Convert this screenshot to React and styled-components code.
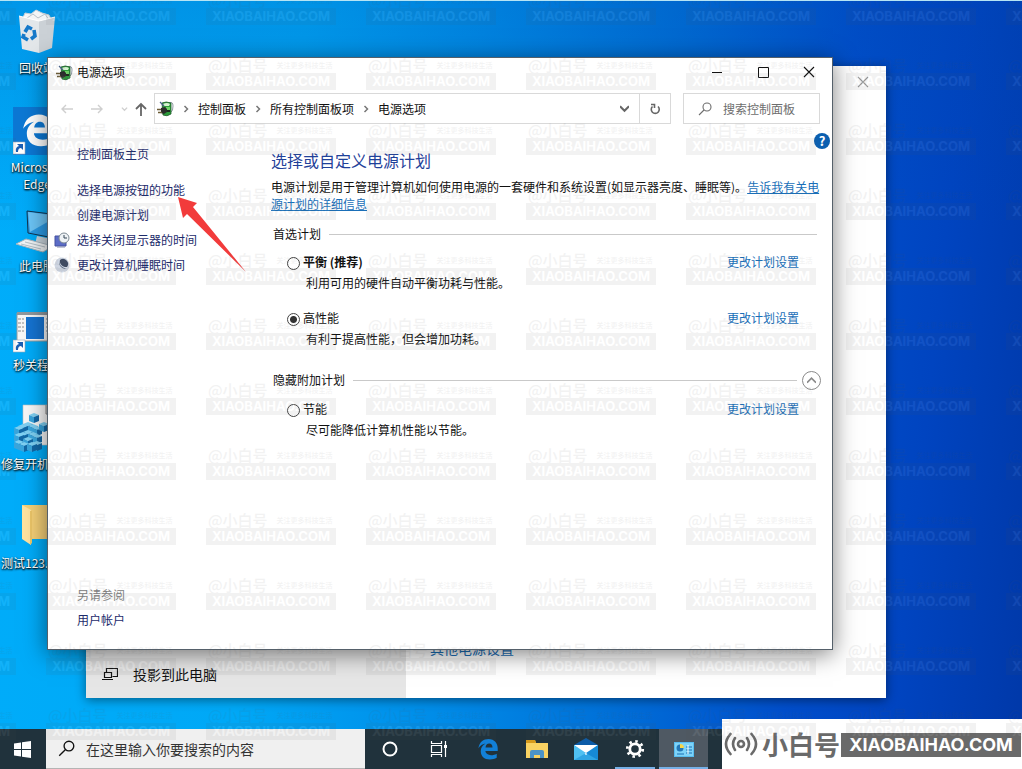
import React, { useState } from 'react';
import styled, { createGlobalStyle, css } from 'styled-components';

const colors = {
  ink: '#111',
  nav: '#1d2b6b',
  heading: '#1f4199',
  link: '#1a6fb8',
  muted: '#6d6d6d',
  line: '#c9c9c9',
  box: '#d9d9d9',
  taskbar: '#20323c',
  brand: '#6a6a6a',
  accent: '#76b0e6',
};

const GlobalStyle = createGlobalStyle`
  * {
    box-sizing: border-box;
  }

  body {
    margin: 0;
    font-family: 'Noto Sans CJK SC', 'Open Sans', sans-serif;
    font-size: 12px;
    line-height: 16px;
    color: ${colors.ink};
  }

  button, input {
    font: inherit;
    color: inherit;
  }

  button {
    padding: 0;
    border: 0;
    background: none;
  }

  svg {
    display: block;
    flex: none;
  }
`;

/* Desktop */

const Screen = styled.div`
  position: relative;
  display: flex;
  flex-direction: column;
  min-height: 100vh;
  overflow: hidden;
  border-top: 1px solid #b5e4f5;
  background:
    linear-gradient(180deg, rgba(0, 70, 170, 0.22), rgba(0, 70, 170, 0) 30%),
    linear-gradient(
      96deg,
      #00adfa 0%,
      #00a8f6 28%,
      #0090ea 44%,
      #0070d8 62%,
      #004ecb 78%,
      #0044c0 88%,
      #0038a8 100%
    );
`;

const Workspace = styled.main`
  position: relative;
  flex: 1;
`;

const Shortcuts = styled.ul`
  display: grid;
  grid-auto-rows: 99px;
  width: 74px;
  margin: 0;
  padding: 0;
  list-style: none;
`;

const Shortcut = styled.li`
  display: flex;
  flex-direction: column;
  align-items: ${p => (p.$long ? 'flex-start' : 'center')};
  gap: 3px;
  padding: 7px 0 0 ${p => (p.$long ? 1 : 0)}px;
  line-height: 17px;
  color: #fff;
  text-align: center;
  white-space: nowrap;
  text-shadow: 0 1px 2px #000, 1px 1px 2px rgba(0, 0, 0, 0.8);

  svg {
    align-self: center;
  }
`;

/* Windows */

const SettingsWindow = styled.section`
  position: absolute;
  top: 65px;
  left: 86px;
  right: 136px;
  bottom: 31px;
  display: flex;
  background: #fff;
  box-shadow: 0 2px 10px rgba(0, 0, 0, 0.45);
`;

const SettingsMenu = styled.div`
  display: flex;
  flex-direction: column;
  justify-content: flex-end;
  width: 320px;
  background: #e6e6e6;
`;

const SettingsItem = styled.button`
  display: flex;
  align-items: center;
  gap: 15px;
  height: 48px;
  padding-left: 16px;
  font-size: 14px;
`;

const SettingsBody = styled.div`
  display: flex;
  flex: 1;
  flex-direction: column;
  justify-content: space-between;
  align-items: flex-start;
  padding: 0 0 40px 24px;
  font-size: 14px;
  line-height: 20px;
`;

const SettingsClose = styled.button`
  display: grid;
  place-items: center;
  align-self: flex-end;
  width: 46px;
  height: 32px;
  color: #999;
`;

const PowerWindow = styled.section`
  position: absolute;
  top: 56px;
  left: 47px;
  right: 189px;
  bottom: 79px;
  display: flex;
  flex-direction: column;
  border: 1px solid #55606a;
  background: #fff;
  box-shadow: 0 4px 22px rgba(0, 0, 0, 0.5);
`;

const TitleBar = styled.header`
  display: flex;
  align-items: center;
  height: 28px;
  padding-left: 8px;
`;

const Title = styled.h1`
  flex: 1;
  margin: 0 0 0 4px;
  font-size: 12px;
  font-weight: 400;
`;

const WindowButton = styled.button`
  display: grid;
  place-items: center;
  width: 46px;
  height: 28px;
`;

const Toolbar = styled.div`
  display: flex;
  gap: 12px;
  height: 47px;
  padding: 7px 12px 9px 11px;
`;

const AddressGroup = styled.div`
  display: flex;
  flex: 1;
  align-items: center;
  height: 31px;
`;

const History = styled.div`
  display: flex;
  align-items: center;
  width: 95px;
`;

const HistoryButton = styled.button`
  display: grid;
  place-items: center;
  width: ${p => p.$width}px;
  height: 30px;
  color: ${p => (p.$active ? '#666' : '#cfcfcf')};
`;

const AddressBar = styled.nav`
  display: flex;
  flex: 1;
  align-items: center;
  height: 31px;
  padding-left: 2px;
  border: 1px solid ${colors.box};
`;

const Crumbs = styled.ol`
  display: flex;
  flex: 1;
  align-items: center;
  margin: 0;
  padding: 0;
  list-style: none;
`;

const Crumb = styled.li`
  display: flex;
  align-items: center;

  a {
    color: inherit;
    text-decoration: none;
  }

  svg {
    width: 24px;
    color: #777;
  }
`;

const AddressButton = styled.button`
  display: grid;
  place-items: center;
  width: ${p => (p.$divided ? 31 : 30)}px;
  height: 29px;
  color: #666;
  ${p =>
    p.$divided &&
    css`
      border-left: 1px solid ${colors.box};
    `}
`;

const SearchBox = styled.label`
  display: flex;
  align-items: center;
  gap: 11px;
  width: 137px;
  height: 31px;
  padding-left: 14px;
  border: 1px solid ${colors.box};
  color: ${colors.muted};
`;

const SearchInput = styled.input`
  flex: 1;
  min-width: 0;
  padding: 0;
  border: 0;
  outline: 0;
  background: none;

  &::placeholder {
    color: ${p => p.$tone || colors.muted};
    opacity: 1;
  }
`;

const WindowBody = styled.div`
  display: flex;
  flex: 1;
`;

const Sidebar = styled.aside`
  display: flex;
  flex-direction: column;
  width: 211px;
  padding: 8px 6px 17px;
`;

const TaskLink = styled.a`
  display: grid;
  grid-template-columns: 16px 1fr;
  column-gap: 7px;
  align-items: center;
  height: 25px;
  margin-bottom: ${p => (p.$home ? 11 : 0)}px;
  color: ${colors.nav};
  text-decoration: none;

  span {
    grid-column: 2;
  }
`;

const SeeAlso = styled.p`
  margin: auto 0 0;
  padding-left: 23px;
  line-height: 24px;
  color: #808080;
`;

const Content = styled.div`
  flex: 1;
  padding: 0 11px 0 12px;
`;

const HelpButton = styled.button`
  display: block;
  width: 16px;
  height: 16px;
  margin: 0 -9px 0 auto;
  border-radius: 50%;
  background: #0b5fb0;
  color: #fff;
  font-size: 13px;
  font-weight: 700;
`;

const Heading = styled.h2`
  margin: 0;
  font-size: 16px;
  font-weight: 400;
  line-height: 22px;
  color: ${colors.heading};
`;

const Intro = styled.p`
  margin: 7px 0 14px;
  line-height: 17px;
`;

const TextLink = styled.a`
  color: ${colors.link};
  text-decoration: ${p => (p.$underlined ? 'underline' : 'none')};
`;

const GroupHeader = styled.div`
  display: flex;
  align-items: center;
  gap: 8px;
  height: ${p => p.$height}px;
  margin-bottom: ${p => p.$space}px;
  padding: 0 ${p => p.$inset}px 0 2px;

  &::after {
    content: '';
    order: 1;
    flex: 1;
    border-top: 1px solid ${colors.line};
  }
`;

const CollapseButton = styled.button`
  order: 2;
  display: grid;
  place-items: center;
  width: 19px;
  height: 19px;
  margin-left: -3px;
  border: 1px solid #8a8a8a;
  border-radius: 50%;
  color: #8a8a8a;
`;

const Plan = styled.div`
  display: grid;
  grid-template-columns: 13px 1fr auto;
  column-gap: 3px;
  align-items: center;
  margin-bottom: 14px;
  padding: 0 22px 0 16px;
  line-height: 21px;
`;

const Radio = styled.input`
  appearance: none;
  width: 13px;
  height: 13px;
  margin: 3px 0 0;
  border: 1px solid #444;
  border-radius: 50%;
  background: #fff;

  &:checked {
    background: radial-gradient(circle, #333 0 3px, #fff 4px);
  }
`;

const PlanName = styled.label`
  font-weight: ${p => (p.$strong ? 700 : 400)};
`;

const PlanNote = styled.p`
  grid-column: 2 / -1;
  margin: 0 0 0 3px;
`;

const Pointer = styled.svg`
  position: absolute;
  left: 178px;
  top: 196px;
`;

/* Taskbar */

const Taskbar = styled.footer`
  display: flex;
  height: 40px;
  background: ${colors.taskbar};
`;

const StartButton = styled.button`
  display: grid;
  place-items: center;
  width: 46px;
  padding-right: 2px;
`;

const TaskSearch = styled.label`
  display: flex;
  align-items: center;
  gap: 11px;
  width: 319px;
  padding-left: 12px;
  border-bottom: 1px solid #b4b4b4;
  background: #f0f0f0;
  font-size: 14px;
`;

const TaskButton = styled.button`
  display: grid;
  place-items: center;
  width: 49px;
  color: #fff;
  ${p =>
    p.$running &&
    css`
      background: linear-gradient(${colors.accent}, ${colors.accent}) bottom / 40px 2px no-repeat;
    `}
  ${p =>
    p.$current &&
    css`
      background-color: #4f5963;
      background-size: 100% 2px;
    `}
`;

/* Marks laid over everything */

const Brand = styled.div`
  position: absolute;
  right: 0;
  bottom: 0;
  display: flex;
  align-items: center;
  width: 300px;
  height: 50px;
  padding-left: 2px;
  background: #fff;
  color: ${colors.brand};
`;

const BrandName = styled.span`
  margin-left: 4px;
  font-size: 26px;
  font-weight: 700;
  line-height: 32px;
`;

const BrandSite = styled.strong`
  flex: 1;
  margin: 2px 1px 0 1px;
  background: ${colors.brand};
  color: #fff;
  font: 700 18px/24px Inter, 'Liberation Sans', sans-serif;
  text-align: center;
`;

const Watermark = styled.div`
  position: absolute;
  inset: 0;
  overflow: hidden;
  opacity: 0.07;
  pointer-events: none;
`;

const WatermarkGrid = styled.div`
  display: grid;
  grid-template-columns: repeat(auto-fill, 160px);
  grid-auto-rows: 65px;
  margin: -10px -160px 0 -114px;
`;

const Mark = styled.div`
  width: 130px;
  color: #555;

  p {
    display: flex;
    align-items: center;
    gap: 9px;
    height: 17px;
    margin: 0;
    padding-left: 2px;
    font-size: 15px;
    font-weight: 500;
    white-space: nowrap;
  }

  small {
    font-size: 7px;
  }

  strong {
    display: block;
    background: #555;
    color: #fff;
    font: 700 13px/17px Inter, 'Liberation Sans', sans-serif;
    text-align: center;
  }
`;

/* Icons */

const Cross = () => (
  <svg width="12" height="12" viewBox="0 0 12 12" stroke="currentColor" strokeWidth="1.1">
    <path d="M1 1l10 10M11 1L1 11" />
  </svg>
);

const Magnifier = ({ size }) => (
  <svg width={size} height={size} viewBox="0 0 14 14" fill="none" stroke="currentColor" strokeWidth="1.1">
    <circle cx="9" cy="5" r="4" />
    <path d="M6 8l-5 5" />
  </svg>
);

const Chevron = ({ d, size = 8, weight = 1.5 }) => (
  <svg height={size} width={size} viewBox="0 0 8 8" fill="none" stroke="currentColor" strokeWidth={weight}>
    <path d={d} />
  </svg>
);

const PowerIcon = () => (
  <svg width="17" height="17" viewBox="0 0 17 17">
    <path d="M12 3q4-2 4 3t-2 6" fill="none" stroke="#8f99a3" />
    <path d="M5 3q4-2 9 0v11q-4 3-8 1z" fill="#2c9a3a" stroke="#1e5a2a" strokeWidth=".8" />
    <path d="M6 4q4-2 7 0l-1 2H7z" fill="#d6f2cf" />
    <path d="M9 7h4v3q-2 1-4 0z" fill="#6fd567" />
    <path d="M3 2l4 4" stroke="#4c6288" strokeWidth="1.2" />
    <path d="M4 8l4-1 2 2v3l-3 2-3-1z" fill="#2a2d2b" />
    <path d="M10 11h3" stroke="#1b2a1d" strokeWidth="2" />
    <path d="M0 9.500h4M1 12.500h4" stroke="#6b5b36" strokeWidth="1.500" />
  </svg>
);

const ShortcutArrow = () => (
  <g>
    <path d="M0 35h12v12H0z" fill="#fff" stroke="#9ab" strokeWidth=".6" />
    <path d="M3 45q-1-5 3-6l-2-2h6v6l-2-2q-3 0-3 4z" fill="#1b5fb4" />
  </g>
);

const RecycleBin = () => (
  <svg width="38" height="48" viewBox="0 0 38 48">
    <path d="M4 12l3-7 6 1 5-4 6 3 7 2 3 6-14 5z" fill="#f4f5f6" stroke="#c9d1d8" />
    <path d="M9 10l6-4 5 4 7-4 4 6" fill="none" stroke="#b8c2ca" />
    <path d="M1 8l20 5v32L4 41z" fill="#e3e7ea" />
    <path d="M37 9l-16 4v32l13-5z" fill="#cbd1d6" />
    <path d="M1 8l20 5 16-4" fill="none" stroke="#fff" />
    <g fill="none" stroke="#1679c9" strokeWidth="3.6">
      <path d="M7 24l3-5 4 2M16 22l1 6-4 3M10 32l-5-3 1-3" />
    </g>
  </svg>
);

const EdgeShape = ({ size, color }) => (
  <svg width={size} height={size} viewBox="0 0 24 24" fill={color}>
    <path d="M1.5 11.2C2.6 4.300 7 1 12.600 1c6.500 0 10 4.700 10 10.300v3H9.100c.3 3 3 4.500 6.200 4.500 2.400 0 4.500-.7 6.200-1.700v4.500c-2 1.200-4.500 1.800-7.400 1.800-6.300 0-10-3.700-10-9 0-3.600 1.900-6.500 5.200-8.300C7 6.600 3.500 7.900 1.500 11.200zM9.300 10.300h7.600c0-2.700-1.400-4.200-3.600-4.200-2.300 0-3.700 1.700-4 4.200z" />
  </svg>
);

const EdgeTile = () => (
  <svg width="48" height="48" viewBox="0 0 48 48">
    <path d="M0 0h48v48H0z" fill="#0c78d4" />
    <svg x="8" y="6" width="34" height="34">
      <EdgeShape size="34" color="#fff" />
    </svg>
    <ShortcutArrow />
  </svg>
);

const ComputerIcon = () => (
  <svg width="48" height="48" viewBox="0 0 48 48">
    <path d="M14 5l32 4v24l-31-6z" fill="#2b9be6" stroke="#13344f" />
    <path d="M15 6l30 4-28 16z" fill="#6cc5f7" />
    <path d="M24 30l10 2 2 6H22z" fill="#c9d4dc" />
    <path d="M3 38l10-5 27 7-10 6z" fill="#f1f4f6" stroke="#a9b6bf" />
    <path d="M8 38l20 5M12 36l20 5" stroke="#b4c0c8" />
  </svg>
);

const ProgramIcon = () => (
  <svg width="48" height="48" viewBox="0 0 48 48">
    <path d="M4 8h44v28H4z" fill="#f7f7f7" stroke="#9b9b9b" />
    <path d="M4 7h44v3H4z" fill="#8f979d" />
    <path d="M13 12h18v22H13z" fill="#1573d1" />
    <path d="M5 14h6M5 18h6M5 22h6M5 26h6M33 14h6M33 18h6M33 22h6M33 26h6" stroke="#8d8d8d" strokeDasharray="3 1" />
    <ShortcutArrow />
  </svg>
);

const Cube = ({ x, y }) => (
  <g transform={`translate(${x} ${y})`}>
    <path d="M0 2l5-2 5 2-5 2z" fill="#7fd0f2" />
    <path d="M0 2l5 2v6L0 8z" fill="#3aa5dc" />
    <path d="M10 2L5 4v6l5-2z" fill="#1268a6" />
  </g>
);

const cubes = [
  [9, 18], [4, 20], [14, 20], [0, 22], [18, 22],
  [9, 26], [4, 28], [14, 28], [0, 29], [18, 30],
  [9, 33], [0, 36], [18, 37], [5, 38], [13, 38],
];

const RegistryIcon = () => (
  <svg width="48" height="48" viewBox="0 0 48 48">
    <path d="M9 1h25l9 9v31H9z" fill="#f7f7f7" stroke="#c0c0c0" strokeWidth=".6" />
    <path d="M32 1v9h9" fill="#ddd" stroke="#888" />
    {cubes.map(([x, y]) => (
      <Cube key={`${x}-${y}`} x={x} y={y} />
    ))}
    <Cube x={15} y={9} />
    <Cube x={25} y={18} />
  </svg>
);

const FolderIcon = () => (
  <svg width="48" height="48" viewBox="0 0 48 48">
    <path d="M8 2h34v34H17z" fill="#f5d077" />
    <path d="M8 2l9 5v35l-9-6z" fill="#ffe3a0" />
    <path d="M16 8h2v32l-2 2z" fill="#ecc568" />
  </svg>
);

const DisplayClockIcon = () => (
  <svg width="16" height="16" viewBox="0 0 16 16">
    <path d="M1 4h11v10H1z" fill="#5b6cc6" stroke="#4450a0" />
    <path d="M3 15h8" stroke="#8890b0" />
    <circle cx="10" cy="6" r="5" fill="#eef2f5" stroke="#7d8a94" />
    <path d="M10 3v3h3" fill="none" stroke="#345" />
  </svg>
);

const MoonIcon = () => (
  <svg width="16" height="16" viewBox="0 0 16 16">
    <circle cx="8" cy="8" r="7.500" fill="#cfd6e2" />
    <path d="M5 3a6 6 0 0 0 8 9A6 6 0 0 1 5 3z" fill="#8d9bb8" />
    <path d="M6 3a5 5 0 0 1 7 7A6 6 0 0 1 6 3z" fill="#3f4b62" />
    <path d="M6 3a6 6 0 0 0 7 8q-3 2-6-1T6 3z" fill="#56657f" />
  </svg>
);

const ProjectIcon = () => (
  <svg width="16" height="14" viewBox="0 0 16 14" fill="none" stroke="#111" strokeWidth="1.200">
    <path d="M4.500 5.500v-4h11v8h-5M2.500 5.500h7v5h-7zM0 12.500h11" />
  </svg>
);

const ExplorerIcon = () => (
  <svg width="22" height="18" viewBox="0 0 22 18">
    <path d="M0 0h9l1 3h12v15H0z" fill="#f9d262" />
    <path d="M0 0h9l1 3H0z" fill="#d69a1c" />
    <path d="M4 18v-6q0-2 2-2h10q2 0 2 2v6h-4v-3H8v3z" fill="#4b93c7" />
  </svg>
);

const MailIcon = () => (
  <svg width="24" height="22" viewBox="0 0 24 22">
    <path d="M0 7l12-7 12 7v3H0z" fill="#0c5ca8" />
    <path d="M0 7h24v15H0z" fill="#2fa5e4" />
    <path d="M0 7h24L12 17z" fill="#fff" />
    <path d="M0 7l12 8L0 22z" fill="#4fc0f2" />
    <path d="M24 7v15L10 14l2 1z" fill="#168ad6" />
  </svg>
);

const GearIcon = () => (
  <svg width="20" height="20" viewBox="0 0 20 20" fill="none" stroke="#fff">
    <circle cx="10" cy="10" r="5.200" strokeWidth="2.800" />
    <circle cx="10" cy="10" r="7.700" strokeWidth="2.800" strokeDasharray="2.500 3.550" />
  </svg>
);

const ControlPanelIcon = () => (
  <svg width="20" height="15" viewBox="0 0 20 15">
    <path d="M0 0h20v15H0z" fill="#58bdf0" />
    <path d="M1 1h18v13H1z" fill="#7ed3f8" />
    <circle cx="6" cy="6" r="3.500" fill="#2277b8" />
    <path d="M6 6V2a4 4 0 0 1 4 4z" fill="#f7d64a" />
    <path d="M3 12h7M12 5h6M12 8h6M12 11h6" stroke="#1a70b5" />
    <path d="M14 3v9" stroke="#fff" />
  </svg>
);

const TaskViewIcon = () => (
  <svg width="18" height="16" viewBox="0 0 18 16" fill="none" stroke="#fff" strokeWidth="1.200">
    <path d="M1.500 4.500h10v7h-10zM1.500 0v2.500h10V0M1.500 16v-2.500h10V16M15.500 0v16" />
    <path d="M14 5.500h3" strokeWidth="3" />
  </svg>
);

const SignalIcon = () => (
  <svg width="34" height="26" viewBox="0 0 34 26" fill="none" stroke="currentColor" strokeWidth="2.600" strokeLinecap="round">
    <circle cx="17" cy="13" r="3" />
    <path d="M11 7q-4 6 0 12M23 7q4 6 0 12M6.500 3q-9 10 0 20M27.500 3q9 10 0 20" />
  </svg>
);

/* Data */

const shortcuts = [
  { name: '回收站', icon: <RecycleBin /> },
  { name: ['Microsoft', 'Edge'], icon: <EdgeTile /> },
  { name: '此电脑', icon: <ComputerIcon /> },
  { name: '秒关程序', icon: <ProgramIcon /> },
  { name: '修复开机', icon: <RegistryIcon />, long: true },
  { name: '测试123.', icon: <FolderIcon />, long: true },
];

const tasks = [
  { name: '选择电源按钮的功能' },
  { name: '创建电源计划' },
  { name: '选择关闭显示器的时间', icon: <DisplayClockIcon /> },
  { name: '更改计算机睡眠时间', icon: <MoonIcon /> },
];

const preferred = [
  { id: 'balanced', name: '平衡 (推荐)', note: '利用可用的硬件自动平衡功耗与性能。', strong: true },
  { id: 'high', name: '高性能', note: '有利于提高性能，但会增加功耗。' },
];

const additional = [{ id: 'saver', name: '节能', note: '尽可能降低计算机性能以节能。' }];

const crumbs = ['控制面板', '所有控制面板项', '电源选项'];

function PlanRow({ plan, checked, onSelect }) {
  return (
    <Plan>
      <Radio
        type="radio"
        name="plan"
        id={plan.id}
        checked={checked}
        onChange={() => onSelect(plan.id)}
      />
      <PlanName htmlFor={plan.id} $strong={plan.strong}>
        {plan.name}
      </PlanName>
      <TextLink href="#plan">更改计划设置</TextLink>
      <PlanNote>{plan.note}</PlanNote>
    </Plan>
  );
}

function Settings() {
  return (
    <SettingsWindow>
      <SettingsMenu>
        <SettingsItem>
          <ProjectIcon />
          投影到此电脑
        </SettingsItem>
      </SettingsMenu>
      <SettingsBody>
        <SettingsClose aria-label="关闭">
          <Cross />
        </SettingsClose>
        <TextLink href="#other">其他电源设置</TextLink>
      </SettingsBody>
    </SettingsWindow>
  );
}

function Address() {
  return (
    <AddressGroup>
      <History>
        <HistoryButton aria-label="后退" $width={16}>
          <svg width="12" height="10" fill="none" stroke="currentColor" strokeWidth="1.400">
            <path d="M12 5H1M5 1L1 5l4 4" />
          </svg>
        </HistoryButton>
        <HistoryButton aria-label="前进" $width={44}>
          <svg width="12" height="10" fill="none" stroke="currentColor" strokeWidth="1.400">
            <path d="M0 5h11M7 1l4 4-4 4" />
          </svg>
        </HistoryButton>
        <HistoryButton aria-label="最近" $width={10}>
          <Chevron d="M1 3l3 3 3-3" size={7} />
        </HistoryButton>
        <HistoryButton aria-label="上移" $active $width={24}>
          <svg width="12" height="14" fill="none" stroke="currentColor" strokeWidth="1.800">
            <path d="M6 14V2M1 7l5-5 5 5" />
          </svg>
        </HistoryButton>
      </History>
      <AddressBar aria-label="地址">
        <PowerIcon />
        <Crumbs>
          {crumbs.map(name => (
            <Crumb key={name}>
              <Chevron d="M2.500 1l3 3-3 3" />
              <a href="#crumb">{name}</a>
            </Crumb>
          ))}
        </Crumbs>
        <AddressButton aria-label="历史">
          <Chevron d="M0 2l4 4 4-4" size={9} weight={1.8} />
        </AddressButton>
        <AddressButton $divided aria-label="刷新">
          <svg width="12" height="12" fill="none" stroke="currentColor" strokeWidth="1.600">
            <path d="M9 3.500a4 4 0 1 1-5.500 0" />
            <path d="M2 1.500h3.500V5" />
          </svg>
        </AddressButton>
      </AddressBar>
    </AddressGroup>
  );
}

function PowerOptions() {
  const [selected, setSelected] = useState('high');

  return (
    <PowerWindow>
      <TitleBar>
        <PowerIcon />
        <Title>电源选项</Title>
        <WindowButton aria-label="最小化">
          <svg width="10" height="10" stroke="#111">
            <path d="M0 5.500h10" />
          </svg>
        </WindowButton>
        <WindowButton aria-label="最大化">
          <svg width="11" height="11" fill="none" stroke="#111">
            <path d="M.5.5h10v10H.5z" />
          </svg>
        </WindowButton>
        <WindowButton aria-label="关闭">
          <Cross />
        </WindowButton>
      </TitleBar>

      <Toolbar>
        <Address />
        <SearchBox>
          <Magnifier size={14} />
          <SearchInput placeholder="搜索控制面板" aria-label="搜索控制面板" />
        </SearchBox>
      </Toolbar>

      <WindowBody>
        <Sidebar>
          <TaskLink href="#home" $home>
            <span>控制面板主页</span>
          </TaskLink>
          {tasks.map(task => (
            <TaskLink href="#task" key={task.name}>
              {task.icon}
              <span>{task.name}</span>
            </TaskLink>
          ))}
          <SeeAlso>另请参阅</SeeAlso>
          <TaskLink href="#accounts">
            <span>用户帐户</span>
          </TaskLink>
        </Sidebar>

        <Content>
          <HelpButton aria-label="帮助">?</HelpButton>
          <Heading>选择或自定义电源计划</Heading>
          <Intro>
            电源计划是用于管理计算机如何使用电源的一套硬件和系统设置(如显示器亮度、睡眠等)。
            <TextLink href="#more" $underlined>
              告诉我有关电源计划的详细信息
            </TextLink>
          </Intro>

          <GroupHeader $height={16} $space={9} $inset={4}>
            首选计划
          </GroupHeader>
          {preferred.map(plan => (
            <PlanRow
              key={plan.id}
              plan={plan}
              checked={selected === plan.id}
              onSelect={setSelected}
            />
          ))}

          <GroupHeader $height={34} $space={1} $inset={0}>
            隐藏附加计划
            <CollapseButton aria-label="隐藏附加计划">
              <Chevron d="M0 6l4-4 4 4" size={9} />
            </CollapseButton>
          </GroupHeader>
          {additional.map(plan => (
            <PlanRow
              key={plan.id}
              plan={plan}
              checked={selected === plan.id}
              onSelect={setSelected}
            />
          ))}
        </Content>
      </WindowBody>
    </PowerWindow>
  );
}

function Marks() {
  return (
    <Watermark aria-hidden="true">
      <WatermarkGrid>
        {Array.from({ length: 96 }, (_, i) => (
          <Mark key={i}>
            <p>
              @小白号 <small>关注更多科技生活</small>
            </p>
            <strong>XIAOBAIHAO.COM</strong>
          </Mark>
        ))}
      </WatermarkGrid>
    </Watermark>
  );
}

export default function App() {
  return (
    <Screen lang="zh-CN">
      <GlobalStyle />
      <Workspace>
        <Shortcuts>
          {shortcuts.map(({ name, icon, long }) => (
            <Shortcut key={name} $long={long}>
              {icon}
              {Array.isArray(name) ? (
                <span>
                  {name[0]}
                  <br />
                  {name[1]}
                </span>
              ) : (
                name
              )}
            </Shortcut>
          ))}
        </Shortcuts>
        <Settings />
        <PowerOptions />
        <Pointer width="70" height="78" viewBox="0 0 70 78" fill="#f23b3b" aria-hidden="true">
          <path d="M0 0l19 6-4 4 53 65L9 17l-4 4z" />
        </Pointer>
      </Workspace>

      <Taskbar>
        <StartButton aria-label="开始">
          <svg width="17" height="17" viewBox="0 0 17 17" fill="#fff">
            <path d="M0 2.500l7-1V8H0zM8 1.300L17 0v8H8zM0 9h7v6.500l-7-1zM8 9h9v8l-9-1.300z" />
          </svg>
        </StartButton>
        <TaskSearch>
          <Magnifier size={17} />
          <SearchInput
            $tone="#333"
            placeholder="在这里输入你要搜索的内容"
            aria-label="在这里输入你要搜索的内容"
          />
        </TaskSearch>
        <TaskButton aria-label="Cortana">
          <svg width="16" height="16" fill="none" stroke="#fff" strokeWidth="2">
            <circle cx="8" cy="8" r="6.500" />
          </svg>
        </TaskButton>
        <TaskButton aria-label="任务视图">
          <TaskViewIcon />
        </TaskButton>
        <TaskButton aria-label="Edge">
          <EdgeShape size="22" color="#1280d8" />
        </TaskButton>
        <TaskButton aria-label="文件资源管理器">
          <ExplorerIcon />
        </TaskButton>
        <TaskButton aria-label="邮件">
          <MailIcon />
        </TaskButton>
        <TaskButton $running aria-label="设置">
          <GearIcon />
        </TaskButton>
        <TaskButton $running $current aria-label="控制面板">
          <ControlPanelIcon />
        </TaskButton>
      </Taskbar>

      <Brand>
        <SignalIcon />
        <BrandName>小白号</BrandName>
        <BrandSite>XIAOBAIHAO.COM</BrandSite>
      </Brand>
      <Marks />
    </Screen>
  );
}
